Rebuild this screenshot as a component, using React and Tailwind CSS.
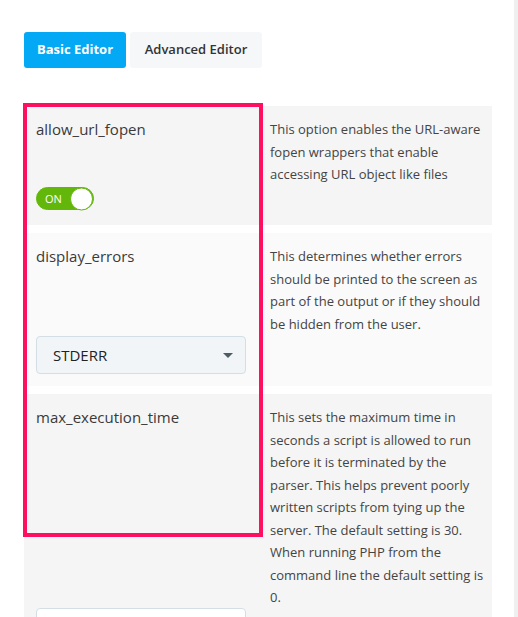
import { useState } from "react";

const settings = [
  {
    name: "allow_url_fopen",
    bg: "bg-[#f5f5f5]",
    gap: "mt-[47px]",
    pb: "pb-[15px]",
    control: "toggle",
    help: "This option enables the URL-aware fopen wrappers that enable accessing URL object like files",
  },
  {
    name: "display_errors",
    bg: "bg-[#fafafa]",
    gap: "mt-[69px]",
    pb: "pb-3",
    control: "select",
    help: "This determines whether errors should be printed to the screen as part of the output or if they should be hidden from the user.",
  },
  {
    name: "max_execution_time",
    bg: "bg-[#f5f5f5]",
    gap: "mt-[180px]",
    pb: "pb-3",
    control: "input",
    help: "This sets the maximum time in seconds a script is allowed to run before it is terminated by the parser. This helps prevent poorly written scripts from tying up the server. The default setting is 30. When running PHP from the command line the default setting is 0.",
  },
];

function Toggle({ on, setOn }) {
  return (
    <button
      onClick={() => setOn(!on)}
      className="relative flex items-center w-[58px] h-[23px] rounded-full bg-[#62b70a] border border-[#62b70a]"
    >
      <span className="pl-[8px] text-[11px] text-white leading-none">ON</span>
      <span className="absolute right-0 top-1/2 -translate-y-1/2 size-[23px] rounded-full bg-white border border-[#62b70a]"></span>
    </button>
  );
}

function Control({ type }) {
  const [on, setOn] = useState(true);
  if (type === "toggle") return <Toggle on={on} setOn={setOn} />;
  if (type === "select")
    return (
      <div className="flex items-center justify-between w-[210px] h-[38px] pl-4 pr-3 rounded bg-[#f1f5f7] border border-[#d3dee5] text-[15px] text-[#222]">
        <span>STDERR</span>
        <span className="w-0 h-0 border-l-[5px] border-r-[5px] border-t-[5px] border-l-transparent border-r-transparent border-t-[#4d5d66]"></span>
      </div>
    );
  return <div className="w-[210px] h-[38px] rounded bg-white border border-[#d3dee5]"></div>;
}

export default function App() {
  const [tab, setTab] = useState("basic");
  return (
    <div className="min-h-screen border-r-4 border-[#efefef] bg-white pl-6 pt-8 font-['Open_Sans',sans-serif]">
      <div className="flex gap-1">
        <button
          onClick={() => setTab("basic")}
          className={`${
            tab === "basic" ? "bg-[#03a9f4] text-white font-bold" : "bg-[#f5f7f9] text-[#333] font-semibold"
          } h-9 w-[102px] rounded-[3px] text-[13px]`}
        >
          Basic Editor
        </button>
        <button
          onClick={() => setTab("advanced")}
          className={`${
            tab === "advanced" ? "bg-[#03a9f4] text-white font-bold" : "bg-[#f5f7f9] text-[#333] font-semibold"
          } h-9 w-[132px] rounded-[3px] text-[13px]`}
        >
          Advanced Editor
        </button>
      </div>
      <div className="relative mt-[38px] w-[468px] flex flex-col gap-2">
        {settings.map((s) => (
          <div key={s.name} className={`flex ${s.bg}`}>
            <div className={`w-[238px] shrink-0 pl-3 pt-3 ${s.pb}`}>
              <div className="text-[15px] leading-[22px] text-[#3a3a3a]">{s.name}</div>
              <div className={s.gap}>
                <Control type={s.control} />
              </div>
            </div>
            <div className="flex-1 pl-2 pr-1 pt-3 pb-3 text-[13px] leading-[22.5px] text-[#444]">{s.help}</div>
          </div>
        ))}
        <div className="absolute -left-px -top-[3px] w-[240px] h-[434px] border-4 border-[#ff0f5f] pointer-events-none"></div>
      </div>
    </div>
  );
}
